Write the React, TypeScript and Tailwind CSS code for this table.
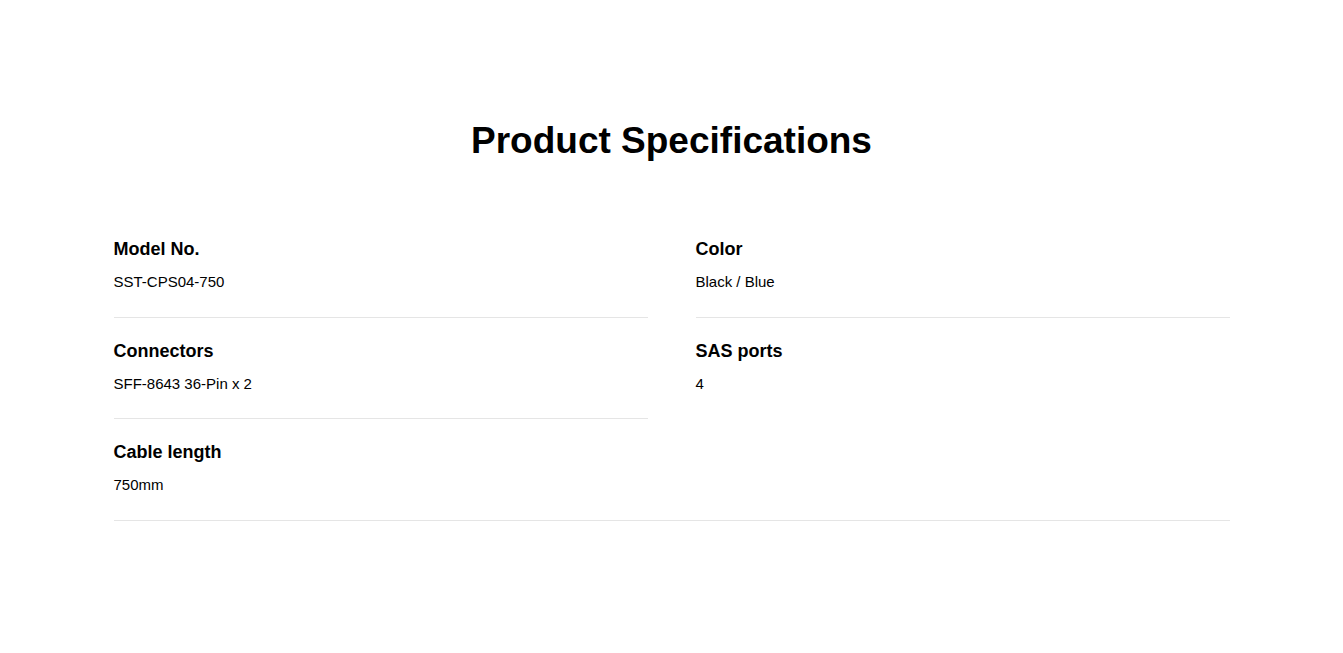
import React from "react";

type Spec = { label: string; value: string; cls: string };

const specs: Spec[] = [
  { label: "Model No.", value: "SST-CPS04-750", cls: "border-b border-[#e5e5e5]" },
  { label: "Color", value: "Black / Blue", cls: "border-b border-[#e5e5e5]" },
  { label: "Connectors", value: "SFF-8643 36-Pin x 2", cls: "border-b border-[#e5e5e5]" },
  { label: "SAS ports", value: "4", cls: "" },
  { label: "Cable length", value: "750mm", cls: "col-span-2 border-b border-[#e5e5e5]" },
];

const App: React.FC = () => {
  return (
    <div className="min-h-screen bg-white text-black font-['Liberation_Sans',Arial,sans-serif]">
      <main className="mx-auto w-[1116px] pt-[121px]">
        <h1 className="text-center text-[37px] leading-[40px] font-bold">Product Specifications</h1>

        {/* specs grid */}
        <div className="mt-[55px] grid grid-cols-2 gap-x-12">
          {specs.map((s) => (
            <div key={s.label} className={`pt-[23px] pb-[24.5px] ${s.cls}`}>
              <h3 className="text-[18px] leading-[20px] font-bold">{s.label}</h3>
              <p className="mt-[13px] text-[15px] leading-[20px]">{s.value}</p>
            </div>
          ))}
        </div>
      </main>
    </div>
  );
};

export default App;
